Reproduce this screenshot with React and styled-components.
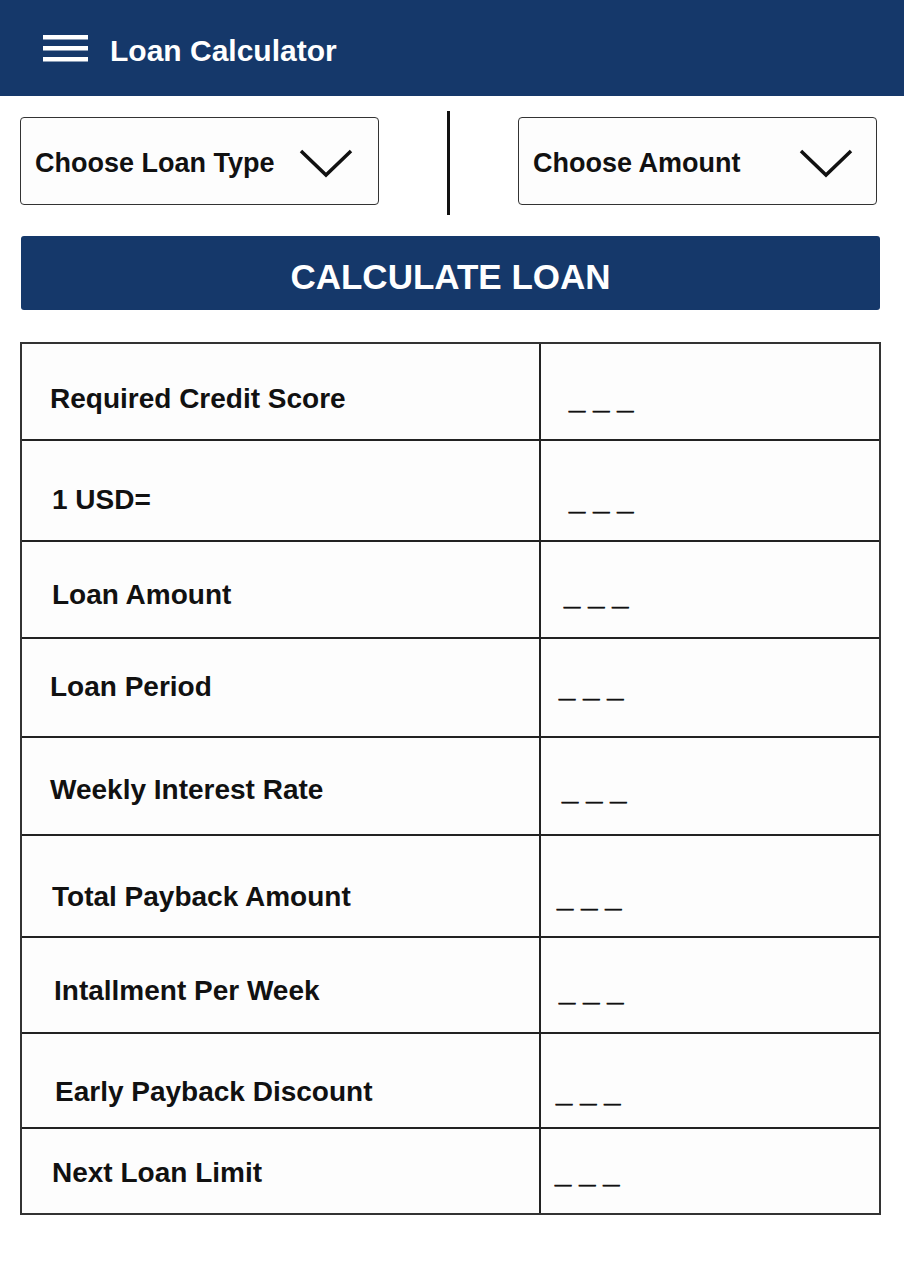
import React from "react";
import styled, { createGlobalStyle } from "styled-components";

const GlobalStyle = createGlobalStyle`
  body {
    margin: 0;
    background: #ffffff;
    font-family: "Liberation Sans", Arial, sans-serif;
  }
`;

const Page = styled.div`
  width: 904px;
  min-height: 1280px;
  background: #ffffff;
`;

const TopBar = styled.header`
  display: flex;
  align-items: center;
  gap: 22px;
  height: 96px;
  padding-left: 43px;
  background-color: #15386a;
  box-sizing: border-box;
`;

const Title = styled.h1`
  margin: 0;
  color: #ffffff;
  font-size: 30px;
  font-weight: 700;
  padding-top: 5px;
`;

const Selectors = styled.div`
  display: flex;
  align-items: center;
  justify-content: space-between;
  padding: 15px 27px 0 20px;
`;

const Select = styled.button`
  display: flex;
  align-items: center;
  justify-content: space-between;
  width: 359px;
  height: 88px;
  margin-bottom: 4px;
  padding: 4px ${({ $right }) => $right}px 0 14px;
  box-sizing: border-box;
  background: #fdfdfd;
  border: 1.5px solid #333;
  border-radius: 4px;
  font-family: inherit;
  font-size: 27px;
  font-weight: 700;
  color: #111;
  cursor: pointer;
`;

const Divider = styled.div`
  width: 2.5px;
  height: 104px;
  background: #111;
`;

const CalcButton = styled.button`
  display: block;
  width: 859px;
  height: 74px;
  margin: 21px 0 0 21px;
  border: none;
  border-radius: 3px;
  background-color: #15386a;
  color: #ffffff;
  font-family: inherit;
  font-size: 35px;
  font-weight: 700;
  padding-top: 8px;
  cursor: pointer;
`;

const Table = styled.div`
  width: 861px;
  margin: 32px 0 0 20px;
  border: 2px solid #333;
  box-sizing: border-box;
  background: #fdfdfd;
`;

const Row = styled.div`
  display: grid;
  grid-template-columns: 519px 1fr;
  height: ${({ $h }) => $h}px;
  box-sizing: border-box;
  border-bottom: ${({ $last }) => ($last ? "none" : "2.5px solid #222")};
`;

const Cell = styled.div`
  display: flex;
  align-items: center;
  box-sizing: border-box;
  padding-left: ${({ $x }) => $x}px;
  padding-top: ${({ $shift }) => ($shift > 0 ? $shift * 2 : 0)}px;
  padding-bottom: ${({ $shift }) => ($shift < 0 ? -$shift * 2 : 0)}px;
  line-height: 32px;
  color: #111;
`;

const Label = styled(Cell)`
  border-right: 2.5px solid #222;
  font-size: 28px;
  font-weight: 700;
`;

const Value = styled(Cell)`
  font-size: 29px;
  font-weight: 700;
  white-space: pre;
  -webkit-text-stroke: 0.7px #111;
`;

const Hamburger = () => (
  <svg width="45" height="27" viewBox="0 0 45 27">
    <rect x="0" y="0" width="45" height="4.5" fill="#fff" />
    <rect x="0" y="11" width="45" height="4.5" fill="#fff" />
    <rect x="0" y="22" width="45" height="4.5" fill="#fff" />
  </svg>
);

const Chevron = () => (
  <svg width="54" height="29" viewBox="0 0 54 29">
    <polyline
      points="2,2 27,26 52,2"
      fill="none"
      stroke="#111"
      strokeWidth="3.5"
      strokeLinejoin="miter"
    />
  </svg>
);

const rows = [
  { label: "Required Credit Score", h: 97, shift: 7, lx: 28, dx: 28 },
  { label: "1 USD=", h: 101, shift: 9, lx: 30, dx: 28 },
  { label: "Loan Amount", h: 97, shift: 5, lx: 30, dx: 23 },
  { label: "Loan Period", h: 99, shift: -1, lx: 28, dx: 18 },
  { label: "Weekly Interest Rate", h: 98, shift: 4, lx: 28, dx: 21 },
  { label: "Total Payback Amount", h: 102, shift: 11, lx: 30, dx: 16 },
  { label: "Intallment Per Week", h: 96, shift: 6, lx: 32, dx: 18 },
  { label: "Early Payback Discount", h: 95, shift: 11, lx: 33, dx: 15 },
  { label: "Next Loan Limit", h: 84, shift: 2, lx: 30, dx: 14 },
];

const App = () => {
  return (
    <Page>
      <GlobalStyle />
      <TopBar>
        <Hamburger />
        <Title>Loan Calculator</Title>
      </TopBar>

      <Selectors>
        <Select $right={25}>
          <span>Choose Loan Type</span>
          <Chevron />
        </Select>
        <Divider />
        <Select $right={23}>
          <span>Choose Amount</span>
          <Chevron />
        </Select>
      </Selectors>

      <CalcButton>CALCULATE LOAN</CalcButton>

      <Table>
        {rows.map((row, i) => (
          <Row key={row.label} $h={row.h} $last={i === rows.length - 1}>
            <Label $x={row.lx} $shift={row.shift}>
              {row.label}
            </Label>
            <Value $x={row.dx} $shift={row.shift}>
              {"_ _ _"}
            </Value>
          </Row>
        ))}
      </Table>
    </Page>
  );
};

export default App;
